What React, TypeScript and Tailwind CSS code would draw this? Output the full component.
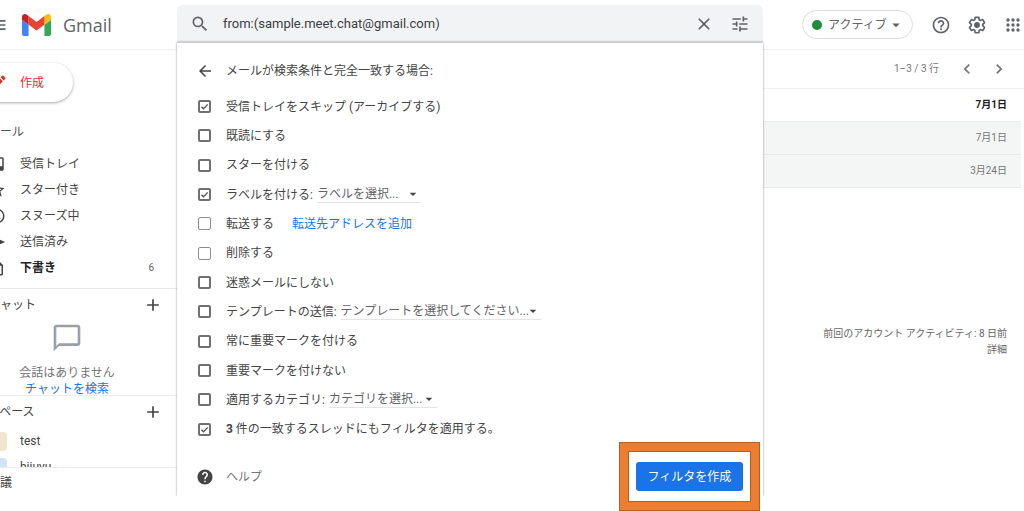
import type { ReactNode } from "react";
import type { IconType } from "react-icons";
import {
  MdAccessTime,
  MdAdd,
  MdArrowBack,
  MdArrowDropDown,
  MdChatBubbleOutline,
  MdChevronLeft,
  MdChevronRight,
  MdClose,
  MdEdit,
  MdHelp,
  MdHelpOutline,
  MdInbox,
  MdMenu,
  MdOutlineInsertDriveFile,
  MdOutlineSend,
  MdSearch,
  MdStarOutline,
  MdTune,
} from "react-icons/md";

const NAV: { label: string; icon: IconType; count?: number }[] = [
  { label: "受信トレイ", icon: MdInbox },
  { label: "スター付き", icon: MdStarOutline },
  { label: "スヌーズ中", icon: MdAccessTime },
  { label: "送信済み", icon: MdOutlineSend },
  { label: "下書き", icon: MdOutlineInsertDriveFile, count: 6 },
];

const MAILS = [
  { date: "7月1日", unread: true },
  { date: "7月1日", unread: false },
  { date: "3月24日", unread: false },
];

function GmailLogo() {
  return (
    <svg viewBox="52 42 88 66" className="h-[22px] w-[29px]" aria-hidden="true">
      <path fill="#4285f4" d="M58 108h14V74L52 59v43c0 3.32 2.69 6 6 6" />
      <path fill="#34a853" d="M120 108h14c3.32 0 6-2.69 6-6V59l-20 15" />
      <path fill="#fbbc04" d="M120 48v26l20-15v-8c0-7.42-8.47-11.65-14.4-7.2" />
      <path fill="#ea4335" d="M72 74V48l24 18 24-18v26L96 92" />
      <path fill="#c5221f" d="M52 51v8l20 15V48l-5.6-4.2c-5.94-4.45-14.4-.22-14.4 7.2" />
    </svg>
  );
}

function GearIcon() {
  return (
    <svg viewBox="0 0 24 24" fill="currentColor" className="size-5" aria-hidden="true">
      <path d="M13.85 22.25h-3.7c-.74 0-1.36-.54-1.45-1.27l-.27-1.89c-.27-.14-.53-.29-.79-.46l-1.8.72c-.7.26-1.47-.03-1.81-.65L2.2 15.53c-.35-.66-.2-1.44.36-1.88l1.53-1.19c-.01-.15-.02-.3-.02-.46 0-.15.01-.31.02-.46l-1.52-1.19c-.59-.45-.74-1.26-.37-1.88l1.85-3.19c.34-.62 1.11-.9 1.79-.63l1.81.73c.26-.17.52-.32.78-.46l.27-1.91c.09-.7.71-1.25 1.44-1.25h3.7c.74 0 1.36.54 1.45 1.27l.27 1.89c.27.14.53.29.79.46l1.8-.72c.71-.26 1.48.03 1.82.65l1.84 3.18c.36.66.2 1.44-.36 1.88l-1.52 1.19c.01.15.02.3.02.46s-.01.31-.02.46l1.52 1.19c.56.45.72 1.23.37 1.86l-1.86 3.22c-.34.62-1.11.9-1.8.63l-1.8-.72c-.26.17-.52.32-.78.46l-.27 1.91c-.1.68-.72 1.22-1.46 1.22zm-3.23-2h2.76l.37-2.55.53-.22c.44-.18.88-.44 1.34-.78l.45-.34 2.38.96 1.38-2.4-2.03-1.58.07-.56c.03-.26.06-.51.06-.78s-.03-.53-.06-.78l-.07-.56 2.03-1.58-1.39-2.4-2.39.96-.45-.35c-.42-.32-.87-.58-1.33-.77l-.52-.22-.37-2.55h-2.76l-.37 2.55-.53.21c-.44.19-.88.44-1.34.79l-.45.33-2.38-.95-1.39 2.39 2.03 1.58-.07.56a7 7 0 0 0-.06.79c0 .26.02.53.06.78l.07.56-2.03 1.58 1.38 2.4 2.39-.96.45.35c.43.33.86.58 1.33.77l.53.22.38 2.55z" />
      <circle cx="12" cy="12" r="3.5" />
    </svg>
  );
}

function AppsIcon() {
  return (
    <svg viewBox="0 0 24 24" fill="currentColor" className="size-5" aria-hidden="true">
      {[6, 12, 18].map((y) =>
        [6, 12, 18].map((x) => <circle key={`${x}-${y}`} cx={x} cy={y} r="2" />)
      )}
    </svg>
  );
}

function FilterOption({
  id,
  label,
  checked,
  muted,
  children,
}: {
  id: string;
  label: ReactNode;
  checked?: boolean;
  muted?: boolean;
  children?: ReactNode;
}) {
  return (
    <li className="flex items-center">
      <span className="mr-[15px] grid size-[13px] place-items-center">
        <input
          id={id}
          type="checkbox"
          defaultChecked={checked}
          className={
            muted
              ? "peer col-start-1 row-start-1 size-[13px] appearance-none rounded-[2px] border border-[#8c8c8c]"
              : "peer col-start-1 row-start-1 size-[13px] appearance-none rounded-[2px] border-2 border-[#707070]"
          }
        />
        <svg
          viewBox="0 0 13 13"
          className="pointer-events-none invisible col-start-1 row-start-1 size-[13px] peer-checked:visible"
          aria-hidden="true"
        >
          <path d="M3.4 6.7l2.1 2.1 4.2-4.4" fill="none" stroke="#555" strokeWidth="1.3" />
        </svg>
      </span>
      <label htmlFor={id}>{label}</label>
      {children}
    </li>
  );
}

function OptionSelect({ label, text, width }: { label: string; text: string; width: string }) {
  return (
    <span className={`ml-1 grid items-center border-b border-[#e4e4e4] text-[#5f6368] ${width}`}>
      <select
        aria-label={label}
        className="col-start-1 row-start-1 w-full appearance-none bg-transparent pr-3 leading-4"
      >
        <option>{text}</option>
      </select>
      <MdArrowDropDown className="pointer-events-none col-start-1 row-start-1 size-4 justify-self-end text-[#444]" />
    </span>
  );
}

function Sidebar() {
  return (
    <aside className="flex w-[177px] shrink-0 flex-col overflow-hidden">
      <div className="flex h-[50px] items-center border-b border-[#efefef]">
        <button aria-label="メインメニュー" className="-ml-3 mr-3.5 text-[#5f6368]">
          <MdMenu className="size-5" />
        </button>
        <a href="#" className="flex items-center gap-3 text-[#5f6368]">
          <GmailLogo />
          <span className="font-['Open_Sans',sans-serif] text-[18px] leading-6">Gmail</span>
        </a>
      </div>

      <button className="-ml-5 mt-[13px] flex h-[39px] w-[93px] items-center gap-3 rounded-full pl-2 text-[#d93025] shadow-[0_1px_3px_rgba(60,64,67,0.45)]">
        <MdEdit className="size-5" />
        作成
      </button>

      <h2 className="-ml-3 mt-[21px] leading-[18px] text-[#555]">メール</h2>
      <nav className="-ml-3 mt-[10px] flex flex-col">
        {NAV.map(({ label, icon: Icon, count }) => (
          <a key={label} href="#" className="flex h-[26px] items-center gap-3.5 pr-[23px]">
            <Icon className="size-[18px] shrink-0" />
            <span className={count ? "font-bold text-[#202124]" : ""}>{label}</span>
            {count && <span className="ml-auto text-[10px] text-[#5f6368]">{count}</span>}
          </a>
        ))}
      </nav>

      <section className="mt-[7px] h-[107px] overflow-hidden border-t border-[#e8e8e8]">
        <div className="-ml-3 flex h-8 items-center justify-between pr-[14px]">
          <h2>チャット</h2>
          <button aria-label="チャットを開始">
            <MdAdd className="size-5" />
          </button>
        </div>
        <div className="mr-[43px] flex flex-col items-center leading-4 text-[#757575]">
          <MdChatBubbleOutline className="mt-[1px] mb-[11px] size-8 text-[#9aa0a6]" />
          <p>会話はありません</p>
          <a href="#" className="text-[#1a73e8]">
            チャットを検索
          </a>
        </div>
      </section>

      <section className="h-[72px] overflow-hidden border-t border-[#ececec]">
        <div className="-ml-3 flex h-8 items-center justify-between pr-[14px]">
          <h2>スペース</h2>
          <button aria-label="スペースを作成">
            <MdAdd className="size-5" />
          </button>
        </div>
        <a href="#" className="-ml-3 flex h-[26px] items-center gap-[13px]">
          <span className="size-[19px] rounded-[4px] bg-[#f0e6d0]" />
          test
        </a>
        <a href="#" className="-ml-3 flex h-[26px] items-center gap-[13px]">
          <span className="size-[19px] rounded-[4px] bg-[#d0e4f5]" />
          hiiuyu
        </a>
      </section>

      <section className="border-t border-[#ececec]">
        <h2 className="-ml-3 flex h-[29px] items-center">会議</h2>
      </section>
    </aside>
  );
}

function FilterPanel() {
  return (
    <main className="relative min-w-0 flex-1 pt-[5px]">
      <form role="search" className="flex h-[37px] items-center rounded-t-md bg-[#f1f3f4] px-[13px] text-[#5f6368]">
        <MdSearch className="size-5" />
        <input
          type="text"
          aria-label="メールを検索"
          defaultValue="from:(sample.meet.chat@gmail.com)"
          className="ml-[13px] min-w-0 flex-1 bg-transparent text-[13px] text-[#3c4043] outline-none"
        />
        <button type="button" aria-label="検索をクリア" className="mr-4">
          <MdClose className="size-5" />
        </button>
        <button type="button" aria-label="検索オプションを表示">
          <MdTune className="size-5" />
        </button>
      </form>

      <div className="border-t border-[#cfcfcf] bg-white pl-[21px] shadow-[0_0_2px_rgba(0,0,0,0.45)] [clip-path:inset(-2px_-4px_0_-4px)]">
        <div className="flex h-[49px] items-center pt-1.5">
          <button aria-label="戻る" className="-ml-0.5 mr-3">
            <MdArrowBack className="size-[18px]" />
          </button>
          <h1>メールが検索条件と完全一致する場合:</h1>
        </div>

        <ul className="grid h-[352px] grid-rows-12">
          <FilterOption id="archive" label="受信トレイをスキップ (アーカイブする)" checked />
          <FilterOption id="read" label="既読にする" />
          <FilterOption id="star" label="スターを付ける" />
          <FilterOption id="label" label="ラベルを付ける:" checked>
            <OptionSelect label="ラベル" text="ラベルを選択..." width="w-[104px]" />
          </FilterOption>
          <FilterOption id="forward" label="転送する" muted>
            <a href="#" className="ml-[18px] text-[#1a73e8]">
              転送先アドレスを追加
            </a>
          </FilterOption>
          <FilterOption id="delete" label="削除する" muted />
          <FilterOption id="not-spam" label="迷惑メールにしない" />
          <FilterOption id="template" label="テンプレートの送信:">
            <OptionSelect label="テンプレート" text="テンプレートを選択してください..." width="w-[200px]" />
          </FilterOption>
          <FilterOption id="important" label="常に重要マークを付ける" />
          <FilterOption id="not-important" label="重要マークを付けない" />
          <FilterOption id="category" label="適用するカテゴリ:">
            <OptionSelect label="カテゴリ" text="カテゴリを選択..." width="w-[108px]" />
          </FilterOption>
          <FilterOption
            id="apply"
            checked
            label={
              <>
                <b>3</b> 件の一致するスレッドにもフィルタを適用する。
              </>
            }
          />
        </ul>

        <div className="flex items-center justify-between pt-[18px] pr-5 pb-[5px]">
          <a href="#" className="flex items-center gap-3 text-[#757575]">
            <MdHelp className="-ml-0.5 size-[18px] text-[#444]" />
            ヘルプ
          </a>
          <button className="h-[29px] w-[107px] rounded-[3px] bg-[#1a73e8] text-white">
            フィルタを作成
          </button>
        </div>
      </div>

      {/* callout frame around the create button */}
      <div className="pointer-events-none absolute right-[3px] -bottom-[14px] h-[69px] w-[141px] border border-[#b05f27]">
        <div className="h-full border-8 border-[#ed7d31]">
          <div className="h-full border border-[#b05f27]" />
        </div>
      </div>
    </main>
  );
}

function MailList() {
  return (
    <section className="w-[261px] shrink-0">
      <div className="flex h-[50px] items-center border-b border-[#efefef] pl-[39px] text-[#5f6368]">
        <button className="flex h-[29px] w-[111px] items-center rounded-full border border-[#dadce0] pl-[9px]">
          <span className="mr-1.5 size-[10px] rounded-full bg-[#1e8e3e]" />
          アクティブ
          <MdArrowDropDown className="size-[18px]" />
        </button>
        <button aria-label="サポート" className="ml-[18px]">
          <MdHelpOutline className="size-5" />
        </button>
        <button aria-label="設定" className="ml-4">
          <GearIcon />
        </button>
        <button aria-label="Google アプリ" className="ml-4">
          <AppsIcon />
        </button>
      </div>

      <div className="flex h-[39px] items-center justify-end border-b border-[#efefef] pr-[15px] text-[10px] text-[#757575]">
        <span className="mr-[18px]">1–3 / 3 行</span>
        <button aria-label="前へ" className="mr-3">
          <MdChevronLeft className="size-5" />
        </button>
        <button aria-label="次へ">
          <MdChevronRight className="size-5" />
        </button>
      </div>

      <div className="pr-[3px]">
        <table className="w-full text-right text-[10px]">
          <tbody>
            {MAILS.map(({ date, unread }, i) => (
              <tr
                key={i}
                className={
                  unread
                    ? "h-8 border-b border-[#ebecec] font-bold text-[#202124]"
                    : "h-[33px] border-b border-[#e8eaea] bg-[#f4f6f6] text-[#757575]"
                }
              >
                <td className="pr-3.5">{date}</td>
              </tr>
            ))}
          </tbody>
        </table>
      </div>

      <footer className="mt-[138px] pr-[17px] text-right text-[10px] leading-4 text-[#666]">
        <p>前回のアカウント アクティビティ: 8 日前</p>
        <a href="#">詳細</a>
      </footer>
    </section>
  );
}

export default function App() {
  return (
    <div className="bg-white pb-[15px] font-[Roboto,'Noto_Sans_CJK_JP',sans-serif] text-[12px] leading-4 text-[#444]">
      <div className="flex">
        <Sidebar />
        <FilterPanel />
        <MailList />
      </div>
    </div>
  );
}
